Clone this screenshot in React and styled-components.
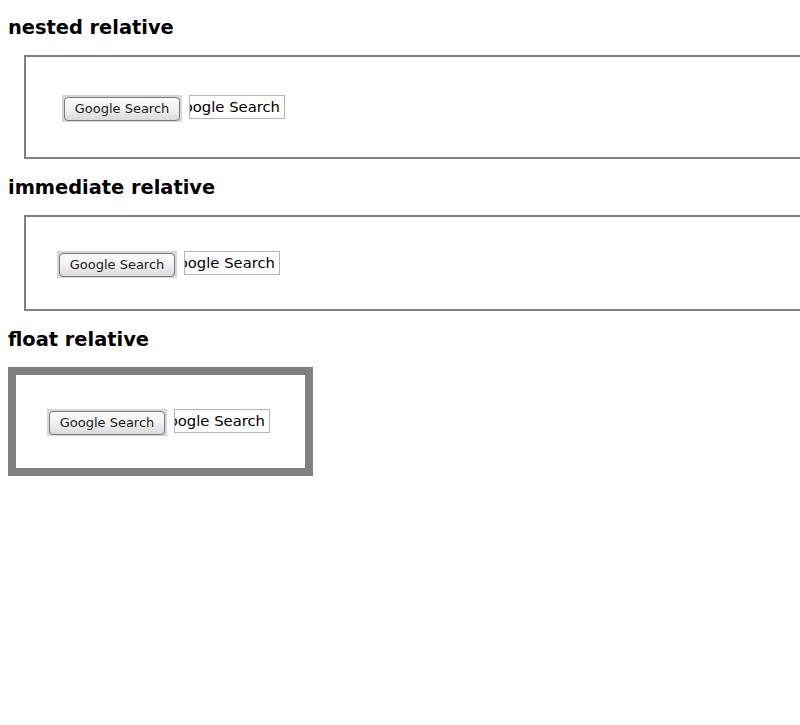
import React from "react";
import styled, { createGlobalStyle } from "styled-components";

const Global = createGlobalStyle`
  html, body {
    margin: 0;
    padding: 0;
    background: #ffffff;
    overflow-x: hidden;
  }
  body {
    font-family: "DejaVu Sans", "Liberation Sans", sans-serif;
    color: #000;
  }
`;

const Page = styled.div`
  padding: 0 8px;
  display: flow-root;
`;

const Heading = styled.h3`
  font-family: "DejaVu Sans", sans-serif;
  font-weight: bold;
  font-size: 19.4px;
  line-height: 24px;
  margin: ${(p) => (p.$first ? "16px" : "17px")} 0 15px;
`;

const Frame = styled.div`
  border: 2px solid #808080;
  margin-left: 16px;
  margin-right: -16px;
  padding: ${(p) => p.$pad};
`;

const FloatFrame = styled.div`
  border: 8px solid #808080;
  width: fit-content;
  padding: 34px 35px 32px 31px;
`;

const Row = styled.div`
  display: flex;
  align-items: flex-start;
  gap: 7px;
`;

const ButtonWell = styled.div`
  background: #d4d7dc;
  padding: 2px 2px 1px 2px;
  display: flex;
`;

const Button = styled.button`
  width: 116px;
  height: 24px;
  box-sizing: border-box;
  border: 1px solid #77797c;
  border-radius: 4px;
  background: linear-gradient(#fcfcfc, #f1f1f1 50%, #d9dadc);
  font-family: "DejaVu Sans", sans-serif;
  font-size: 13px;
  color: #1a1a1a;
  padding: 0 0 1px;
  margin: 0;
  display: flex;
  align-items: center;
  justify-content: center;
  line-height: 1;
`;

const Field = styled.div`
  width: 96px;
  height: 24px;
  box-sizing: border-box;
  border: 1px solid #b4b4b4;
  background: #fff;
  display: flex;
  align-items: center;
  justify-content: flex-end;
  overflow: hidden;
  padding: 0 4px 1px 0;
  white-space: nowrap;
  font-family: "DejaVu Sans", sans-serif;
  font-size: 14.8px;
  color: #000;
`;

const SearchRow = () => (
  <Row>
    <ButtonWell>
      <Button type="button">Google Search</Button>
    </ButtonWell>
    <Field>
      <span>Google Search</span>
    </Field>
  </Row>
);

export default function App() {
  return (
    <>
      <Global />
      <Page>
        <Heading $first>nested relative</Heading>
        <Frame $pad="38px 0 35px 36px">
          <SearchRow />
        </Frame>
        <Heading>immediate relative</Heading>
        <Frame $pad="34px 0 31px 31px">
          <SearchRow />
        </Frame>
        <Heading>float relative</Heading>
        <FloatFrame>
          <SearchRow />
        </FloatFrame>
      </Page>
    </>
  );
}
